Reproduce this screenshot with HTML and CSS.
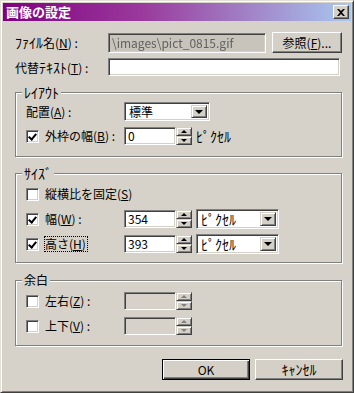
FILE: index.html
```html
<!DOCTYPE html>
<html lang="ja">

<head>
    <meta charset="UTF-8">
    <meta name="viewport" content="width=device-width, initial-scale=1.0">
    <title>画像の設定</title>
    <link rel="stylesheet" href="styles.css">
</head>

<body>
    <div class="window">
        <div class="titlebar">
            <span class="title">画像の設定</span>
            <span class="close">
                <svg width="8" height="7" viewBox="0 0 8 7"><path d="M0 0h2l2 2 2-2h2L5 3.5 8 7H6L4 5 2 7H0l3-3.5z" fill="#000"/></svg>
            </span>
        </div>

        <div class="content">
            <div class="row">
                <span class="label"><span class="kana">ﾌｧｲﾙ</span>名(<u>N</u>) :</span>
                <div class="field file-field"><span class="file-path">\images\pict_0815.gif</span></div>
                <button class="btn browse">参照(<u>F</u>)...</button>
            </div>
            <div class="row row-alt">
                <span class="label">代替<span class="kana">ﾃｷｽﾄ</span>(<u>T</u>) :</span>
                <div class="field alt-field"></div>
            </div>

            <!-- レイアウト -->
            <fieldset class="group group-layout">
                <legend class="kana">ﾚｲｱｳﾄ</legend>
                <div class="grow">
                    <span class="glabel">配置(<u>A</u>) :</span>
                    <div class="field select sel-align">
                        <span class="sel-value">標準</span>
                        <span class="sel-btn"><span class="tri-down"></span></span>
                    </div>
                </div>
                <div class="grow grow-spin">
                    <span class="glabel"><span class="check on"></span>外枠の幅(<u>B</u>) :</span>
                    <div class="spin">
                        <div class="field spin-field">0</div>
                        <div class="spin-btns">
                            <span class="spin-btn"><span class="tri-up"></span></span>
                            <span class="spin-btn"><span class="tri-down small"></span></span>
                        </div>
                    </div>
                    <span class="unit kana">ﾋﾟｸｾﾙ</span>
                </div>
            </fieldset>

            <!-- サイズ -->
            <fieldset class="group group-size">
                <legend class="kana">ｻｲｽﾞ</legend>
                <div class="grow grow-check">
                    <span class="glabel wide"><span class="check"></span>縦横比を固定(<u>S</u>)</span>
                </div>
                <div class="grow grow-size">
                    <span class="glabel"><span class="check on"></span>幅(<u>W</u>) :</span>
                    <div class="spin">
                        <div class="field spin-field">354</div>
                        <div class="spin-btns">
                            <span class="spin-btn"><span class="tri-up"></span></span>
                            <span class="spin-btn"><span class="tri-down small"></span></span>
                        </div>
                    </div>
                    <div class="field select sel-unit">
                        <span class="sel-value kana">ﾋﾟｸｾﾙ</span>
                        <span class="sel-btn"><span class="tri-down"></span></span>
                    </div>
                </div>
                <div class="grow grow-size">
                    <span class="glabel"><span class="check on"></span><span class="focus">高さ(<u>H</u>)</span></span>
                    <div class="spin">
                        <div class="field spin-field">393</div>
                        <div class="spin-btns">
                            <span class="spin-btn"><span class="tri-up"></span></span>
                            <span class="spin-btn"><span class="tri-down small"></span></span>
                        </div>
                    </div>
                    <div class="field select sel-unit">
                        <span class="sel-value kana">ﾋﾟｸｾﾙ</span>
                        <span class="sel-btn"><span class="tri-down"></span></span>
                    </div>
                </div>
            </fieldset>

            <!-- 余白 -->
            <fieldset class="group group-margin">
                <legend>余白</legend>
                <div class="grow grow-spin">
                    <span class="glabel"><span class="check"></span>左右(<u>Z</u>) :</span>
                    <div class="spin disabled">
                        <div class="field spin-field"></div>
                        <div class="spin-btns">
                            <span class="spin-btn"><span class="tri-up"></span></span>
                            <span class="spin-btn"><span class="tri-down small"></span></span>
                        </div>
                    </div>
                </div>
                <div class="grow grow-spin">
                    <span class="glabel"><span class="check"></span>上下(<u>V</u>) :</span>
                    <div class="spin disabled">
                        <div class="field spin-field"></div>
                        <div class="spin-btns">
                            <span class="spin-btn"><span class="tri-up"></span></span>
                            <span class="spin-btn"><span class="tri-down small"></span></span>
                        </div>
                    </div>
                </div>
            </fieldset>

            <div class="actions">
                <button class="btn btn-default">OK</button>
                <button class="btn"><span class="kana">ｷｬﾝｾﾙ</span></button>
            </div>
        </div>
    </div>
</body>

</html>
```

FILE: styles.css
```css
* {
    margin: 0;
    padding: 0;
    box-sizing: border-box;
}

body {
    font-family: "Noto Sans CJK JP", sans-serif;
    font-size: 12px;
    line-height: 14px;
    color: #000;
}

u {
    text-underline-offset: 1px;
}

/* 半角カナ: Noto draws them small, bump them up */
.kana {
    font-size: 14px;
    line-height: 14px;
}

.window {
    width: 354px;
    height: 393px;
    background: #d6d2c9;
    border: 1px solid;
    border-color: #e4e0d8 #404040 #404040 #e4e0d8;
    box-shadow: inset 1px 1px 0 #fff, inset -1px -1px 0 #808080;
    padding: 2px;
}

/* barre de titre */
.titlebar {
    height: 18px;
    display: flex;
    align-items: center;
    justify-content: space-between;
    padding: 0 2px 0 3px;
    background: linear-gradient(to right, #800080 0%, #9a3a9c 40%, #a8c8f0 100%);
}

.title {
    color: #fff;
    font-weight: bold;
    font-size: 13px;
}

.close {
    width: 16px;
    height: 14px;
    display: flex;
    align-items: center;
    justify-content: center;
    background: #d4d0c8;
    border: 1px solid;
    border-color: #fff #404040 #404040 #fff;
    box-shadow: inset -1px -1px 0 #808080;
}

.content {
    padding: 11px 9px 0 12px;
}

.row {
    display: flex;
    align-items: flex-start;
}

.label {
    width: 93px;
    align-self: center;
    white-space: nowrap;
}

.row-alt {
    margin-top: 5px;
}

/* champs */
.field {
    background: #fff;
    border: 1px solid;
    border-color: #808080 #fff #fff #808080;
    box-shadow: inset 1px 1px 0 #404040, inset -1px -1px 0 #d4d0c8;
}

.file-field {
    width: 158px;
    height: 20px;
    margin-top: 1px;
    background: #c8c4bc;
    overflow: hidden;
    padding: 2px 3px;
    white-space: nowrap;
}

.file-path {
    color: #606060;
    filter: blur(0.6px);
}

.alt-field {
    width: 232px;
    height: 18px;
}

/* boutons */
.btn {
    font-family: inherit;
    font-size: 12px;
    background: #d4d0c8;
    color: #000;
    border: 1px solid;
    border-color: #fff #404040 #404040 #fff;
    box-shadow: inset -1px -1px 0 #808080;
}

.browse {
    width: 70px;
    height: 21px;
    margin-left: 6px;
}

.btn-default {
    border-color: #000;
    box-shadow: inset 1px 1px 0 #fff, inset -1px -1px 0 #404040, inset -2px -2px 0 #808080;
}

.actions {
    display: flex;
    justify-content: flex-end;
    gap: 5px;
    margin-top: 13px;
    margin-right: -1px;
}

.actions .btn {
    width: 88px;
    height: 21px;
}

/* groupes */
.group {
    border: 1px solid #808080;
    box-shadow: inset 1px 1px 0 #fff, 1px 1px 0 #fff;
    padding: 3px 10px 11px 10px;
    width: 327px;
}

.group legend {
    padding: 0 2px;
    margin-left: -4px;
    background: #d6d2c9;
    line-height: 14px;
}

.group-layout {
    margin-top: 9px;
}

.group-size {
    margin-top: 9px;
    padding-top: 6px;
    padding-bottom: 8px;
}

.group-margin {
    margin-top: 10px;
    padding-top: 5px;
    padding-bottom: 10px;
}

.grow {
    display: flex;
    align-items: center;
}

.grow + .grow {
    margin-top: 6px;
}

.grow-check {
    height: 16px;
}

.group-size .grow-check + .grow {
    margin-top: 7px;
}

.group-size .grow-size + .grow-size {
    margin-top: 5px;
}

.group-margin .grow + .grow {
    margin-top: 7px;
}

.glabel {
    width: 98px;
    flex-shrink: 0;
    display: flex;
    align-items: center;
    white-space: nowrap;
}

.glabel.wide {
    width: auto;
}

.focus {
    outline: 1px dotted #000;
    outline-offset: 0;
    padding-right: 1px;
}

/* cases à cocher */
.check {
    width: 13px;
    height: 13px;
    flex-shrink: 0;
    margin-right: 6px;
    background: #fff;
    border: 1px solid;
    border-color: #808080 #fff #fff #808080;
    box-shadow: inset 1px 1px 0 #404040, inset -1px -1px 0 #d4d0c8;
    position: relative;
}

.check.on::after {
    content: "";
    position: absolute;
    left: 3px;
    top: 1px;
    width: 3px;
    height: 6px;
    border: solid #000;
    border-width: 0 2px 2px 0;
    transform: rotate(40deg);
}

/* listes déroulantes */
.select {
    height: 20px;
    display: flex;
    align-items: center;
    justify-content: space-between;
    padding: 2px;
}

.sel-align {
    width: 86px;
    height: 19px;
}

.sel-unit {
    width: 83px;
    margin-left: 4px;
}

.sel-value {
    padding-left: 2px;
}

.sel-btn {
    width: 16px;
    height: 100%;
    display: flex;
    align-items: center;
    justify-content: center;
    background: #d4d0c8;
    border: 1px solid;
    border-color: #d4d0c8 #404040 #404040 #d4d0c8;
    box-shadow: inset 1px 1px 0 #fff, inset -1px -1px 0 #808080;
}

.tri-down {
    width: 0;
    height: 0;
    border-left: 4px solid transparent;
    border-right: 4px solid transparent;
    border-top: 4px solid #000;
}

.tri-down.small,
.tri-up {
    border-left-width: 3px;
    border-right-width: 3px;
    border-top-width: 3px;
}

.tri-up {
    width: 0;
    height: 0;
    border-left: 3px solid transparent;
    border-right: 3px solid transparent;
    border-bottom: 3px solid #000;
}

/* spin */
.spin {
    display: flex;
    height: 18px;
}

.spin-field {
    width: 52px;
    height: 18px;
    padding: 1px 3px;
}

.spin-btns {
    width: 16px;
    display: flex;
    flex-direction: column;
}

.spin-btn {
    flex: 1;
    display: flex;
    align-items: center;
    justify-content: center;
    background: #d4d0c8;
    border: 1px solid;
    border-color: #d4d0c8 #404040 #404040 #d4d0c8;
    box-shadow: inset 1px 1px 0 #fff, inset -1px -1px 0 #808080;
}

.spin.disabled .spin-field {
    background: #d6d2c9;
}

.spin.disabled .tri-up {
    border-bottom-color: #808080;
}

.spin.disabled .tri-down {
    border-top-color: #808080;
}

.unit {
    margin-left: 4px;
}
```
